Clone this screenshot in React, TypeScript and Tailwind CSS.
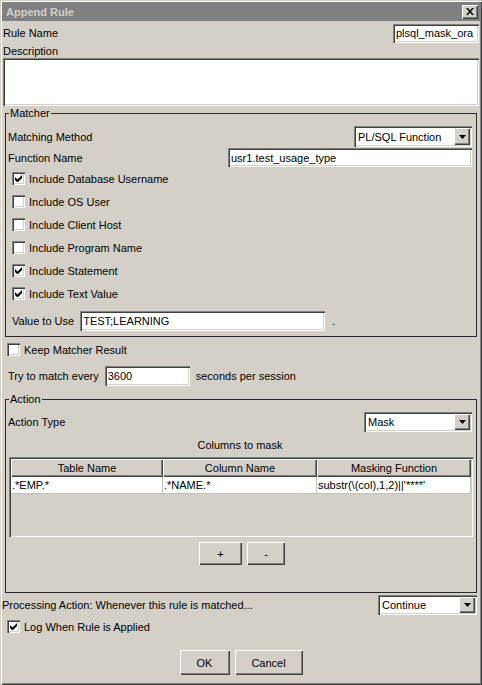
import React from "react";

const bevelIn =
  "shadow-[inset_1px_1px_0_#808080,inset_2px_2px_0_#404040,inset_-1px_-1px_0_#ffffff,inset_-2px_-2px_0_#d4d0c8]";
const sunken = `bg-white ${bevelIn}`;
const raised =
  "bg-[#d4d0c8] shadow-[inset_1px_1px_0_#ffffff,inset_-1px_-1px_0_#404040,inset_-2px_-2px_0_#808080]";

const TextField = ({ value, className }: { value: string; className: string }) => (
  <div className={`${sunken} ${className} flex items-center pl-[3px] overflow-hidden whitespace-nowrap`}>
    {value}
  </div>
);

const Combo = ({ value, className }: { value: string; className: string }) => (
  <div className={`${sunken} ${className} flex items-center p-[2px]`}>
    <span className="flex-1 pl-[2px] whitespace-nowrap">{value}</span>
    <div className={`${raised} w-[16px] h-full flex items-center justify-center`}>
      <svg width="7" height="4" viewBox="0 0 7 4">
        <path d="M0 0h7L3.5 4z" fill="#000" />
      </svg>
    </div>
  </div>
);

const CheckBox = ({ checked, label, className = "" }: { checked?: boolean; label: string; className?: string }) => (
  <div className={`flex items-center h-[23px] ${className}`}>
    <div className={`${sunken} w-[13px] h-[13px] flex items-center justify-center`}>
      {checked && (
        <svg width="7" height="7" viewBox="0 0 7 7">
          <path d="M0 2v3l2 2h1l4-4V0L2.5 4.5z" fill="#000" />
        </svg>
      )}
    </div>
    <span className="ml-[4px]">{label}</span>
  </div>
);

const Group = ({ title, className, children }: { title: string; className: string; children: React.ReactNode }) => (
  <div className={`relative border border-[#2a2a2a] ${className}`}>
    <span className="absolute -top-[8px] left-[3px] bg-[#d4d0c8] px-[1px] leading-[14px]">{title}</span>
    {children}
  </div>
);

export default function App() {
  return (
    <div className="w-[482px] h-[685px] bg-[#d4d0c8] text-black text-[11px] leading-[14px] font-['Liberation_Sans',Arial,sans-serif] shadow-[inset_1px_1px_0_#d4d0c8,inset_2px_2px_0_#ffffff,inset_-1px_-1px_0_#404040,inset_-2px_-2px_0_#808080] pt-[2px] px-[2px] flex flex-col">
      {/* TITLE */}
      <div className="h-[19px] bg-[#808080] flex items-center justify-between pl-[4px] pr-[2px]">
        <span className="font-bold text-[#d4d0c8]">Append Rule</span>
        <div className={`${raised} w-[16px] h-[14px] flex items-center justify-center`}>
          <svg width="8" height="7" viewBox="0 0 8 7">
            <path d="M0 0h2l2 2.5L6 0h2L5 3.5 8 7H6L4 4.5 2 7H0l3-3.5z" fill="#000" />
          </svg>
        </div>
      </div>

      <div className="px-[1px] flex flex-col">
        <div className="flex items-center justify-between h-[20px] mt-[2px]">
          <span>Rule Name</span>
          <TextField value="plsql_mask_ora" className="w-[86px] h-[19px]" />
        </div>
        <div className="h-[14px] flex items-center mt-[1px]">Description</div>
        <div className={`${sunken} h-[48px]`} />

        {/* MATCHER */}
        <Group title="Matcher" className="mt-[7px] mx-[2px] pt-[12px] pb-[5px] pl-[2px] pr-[4px]">
          <div className="flex items-center justify-between h-[21px]">
            <span>Matching Method</span>
            <Combo value="PL/SQL Function" className="w-[118px] h-[21px]" />
          </div>
          <div className="flex items-center justify-between h-[19px] mt-[1px]">
            <span>Function Name</span>
            <TextField value="usr1.test_usage_type" className="w-[244px] h-[19px]" />
          </div>
          <div className="pl-[4px]">
            <CheckBox checked label="Include Database Username" />
            <CheckBox label="Include OS User" />
            <CheckBox label="Include Client Host" />
            <CheckBox label="Include Program Name" />
            <CheckBox checked label="Include Statement" />
            <CheckBox checked label="Include Text Value" />
          </div>
          <div className="flex items-center h-[20px] mt-[6px] pl-[4px]">
            <span>Value to Use</span>
            <TextField value="TEST;LEARNING" className="ml-[6px] w-[245px] h-[20px]" />
            <span className="ml-[7px]">.</span>
          </div>
        </Group>

        <CheckBox label="Keep Matcher Result" className="pl-[4px] mt-[1px]" />
        <div className="flex items-center h-[20px] mt-[5px] pl-[5px]">
          <span>Try to match every</span>
          <TextField value="3600" className="ml-[6px] w-[85px] h-[20px]" />
          <span className="ml-[6px]">seconds per session</span>
        </div>

        {/* ACTION */}
        <Group title="Action" className="mt-[13px] mx-[2px] pt-[12px] pb-[27px] pl-[2px] pr-[4px]">
          <div className="flex items-center justify-between h-[20px]">
            <span>Action Type</span>
            <Combo value="Mask" className="w-[108px] h-[20px]" />
          </div>
          <div className="h-[14px] mt-[6px] text-center">Columns to mask</div>
          <div className={`${bevelIn} bg-[#d4d0c8] mt-[5px] ml-[1px] mr-[-1px] h-[80px] p-[2px] flex flex-col`}>
            <div className="grid grid-cols-[152px_154px_1fr] h-[18px]">
              {["Table Name", "Column Name", "Masking Function"].map((h) => (
                <div key={h} className={`${raised} flex items-center justify-center`}>
                  {h}
                </div>
              ))}
            </div>
            <div className="grid grid-cols-[152px_154px_1fr] h-[17px] bg-white">
              {[".*EMP.*", ".*NAME.*", "substr(\\(col),1,2)||'****'"].map((c) => (
                <div key={c} className="border-r border-b border-[#c0c0c0] flex items-center pl-[1px] whitespace-nowrap overflow-hidden">
                  {c}
                </div>
              ))}
            </div>
          </div>
          <div className="flex justify-center gap-[5px] mt-[5px] pl-[4px]">
            <button className={`${raised} w-[43px] h-[23px]`}>+</button>
            <button className={`${raised} w-[38px] h-[23px]`}>-</button>
          </div>
        </Group>

        <div className="flex items-center justify-between h-[20px] mt-[2px] pr-[2px]">
          <span className="-ml-[1px]">Processing Action: Whenever this rule is matched...</span>
          <Combo value="Continue" className="w-[99px] h-[20px]" />
        </div>
        <CheckBox checked label="Log When Rule is Applied" className="pl-[4px]" />

        <div className="flex justify-center gap-[5px] mt-[12px]">
          <button className={`${raised} w-[50px] h-[25px]`}>OK</button>
          <button className={`${raised} w-[68px] h-[25px]`}>Cancel</button>
        </div>
      </div>
    </div>
  );
}
